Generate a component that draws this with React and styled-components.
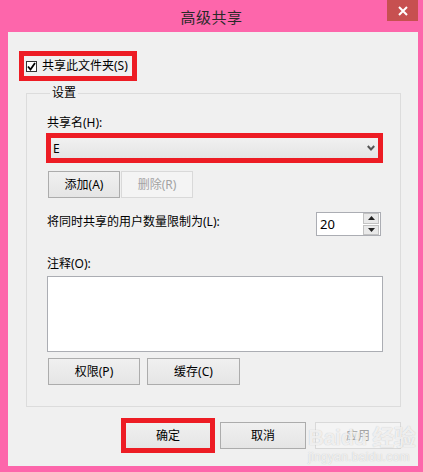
import React from 'react'
import styled, { createGlobalStyle } from 'styled-components'

const GlobalStyle = createGlobalStyle`
  html, body {
    margin: 0;
    padding: 0;
    background: #fd66ab;
  }
  * {
    box-sizing: border-box;
  }
`

const font = `"Noto Sans", "Noto Sans CJK SC", sans-serif`

const Frame = styled.div`
  position: relative;
  width: 423px;
  height: 472px;
  background: #fd66ab;
  padding: 0 5px 6px 8px;
  display: flex;
  flex-direction: column;
  font-family: ${font};
  font-size: 12px;
  color: #000;
`

const TitleBar = styled.div`
  position: relative;
  height: 32px;
  display: flex;
  align-items: center;
  justify-content: center;
  padding-right: 3px;
`

const Title = styled.div`
  font-size: 15px;
  color: #2a2a2a;
  letter-spacing: 0.5px;
`

const CloseButton = styled.div`
  position: absolute;
  top: 0;
  right: 0;
  width: 31px;
  height: 21px;
  background: #c75050;
  display: flex;
  align-items: center;
  justify-content: center;
`

const Client = styled.div`
  flex: 1;
  background: #f0f0f0;
  padding: 24px 17px 0 18px;
  display: flex;
  flex-direction: column;
`

const CheckLabel = styled.label`
  align-self: flex-start;
  margin-left: -2px;
  height: 20px;
  display: flex;
  align-items: center;
  gap: 5px;
  padding: 0 4px 0 2px;
  line-height: 16px;
  outline: ${p => (p.$marked ? '5px solid #ed1c24' : 'none')};
`

const CheckBox = styled.span`
  width: 11px;
  height: 11px;
  border: 1px solid #333;
  background: #fff;
  display: flex;
  align-items: center;
  justify-content: center;
`

const Group = styled.fieldset`
  margin: 9px 0 0 0;
  border: 1px solid #dcdcdc;
  padding: 14px 17px 21px 20px;
  min-width: 0;
  display: flex;
  flex-direction: column;
`

const Legend = styled.legend`
  margin-left: 3px;
  padding: 0 2px;
  line-height: 16px;
`

const FieldLabel = styled.div`
  line-height: 16px;
  margin-top: ${p => p.$top || 0}px;
`

const Combo = styled.div`
  margin: 4px 0 0 1px;
  width: 333px;
  height: 26px;
  background: linear-gradient(#f2f2f2, #e3e3e3);
  border: 1px solid #acacac;
  display: flex;
  align-items: center;
  justify-content: space-between;
  padding: 0 5px 0 4px;
  outline: ${p => (p.$marked ? '5px solid #ed1c24' : 'none')};
  outline-offset: -3px;
`

const ButtonRow = styled.div`
  display: flex;
  gap: ${p => p.$gap || 1}px;
  margin-top: ${p => p.$top || 0}px;
  justify-content: ${p => (p.$end ? 'flex-end' : 'flex-start')};
  padding-left: ${p => p.$indent || 0}px;
`

const Button = styled.div`
  width: ${p => p.$w || 86}px;
  height: 27px;
  display: flex;
  align-items: center;
  justify-content: center;
  line-height: 16px;
  background: ${p => (p.$disabled ? '#f4f4f4' : 'linear-gradient(#f0f0f0, #e5e5e5)')};
  border: 1px solid ${p => (p.$disabled ? '#d9d9d9' : p.$default ? '#3399ff' : '#acacac')};
  color: ${p => (p.$disabled ? '#a3a3a3' : '#000')};
  outline: ${p => (p.$marked ? '5px solid #ed1c24' : 'none')};
  outline-offset: -1px;
`

const LimitRow = styled.div`
  display: flex;
  justify-content: space-between;
  align-items: flex-start;
  margin-top: 14px;
  padding-right: 2px;
`

const LimitText = styled.div`
  line-height: 16px;
  padding-top: 2px;
`

const Spin = styled.div`
  width: 65px;
  height: 24px;
  border: 1px solid #abadb3;
  background: #fff;
  display: flex;
  align-items: center;
  justify-content: space-between;
  padding: 0 1px 0 3px;
  font-size: 13px;
`

const SpinButtons = styled.div`
  display: flex;
  flex-direction: column;
  gap: 1px;
  height: 22px;
`

const SpinButton = styled.div`
  width: 16px;
  flex: 1;
  background: #e9e9e9;
  border: 1px solid #c2c2c2;
  display: flex;
  align-items: center;
  justify-content: center;
`

const Memo = styled.div`
  margin-top: 4px;
  height: 76px;
  border: 1px solid #abadb3;
  background: #fff;
`

const Watermark = styled.div`
  position: absolute;
  left: 308px;
  top: 426px;
  display: flex;
  flex-direction: column;
  color: rgba(255, 255, 255, 0.75);
  text-shadow: 0 0 1px rgba(120, 120, 120, 0.45);
  pointer-events: none;
`

const MarkMain = styled.div`
  font-family: "Liberation Sans", "Noto Sans CJK SC", sans-serif;
  font-size: 22px;
  font-weight: bold;
  line-height: 24px;
  letter-spacing: -0.5px;
`

const MarkSub = styled.div`
  font-family: "Liberation Sans", sans-serif;
  font-size: 12px;
  line-height: 14px;
  letter-spacing: 0.3px;
`

const Triangle = ({ up }) => (
  <svg width="7" height="4" viewBox="0 0 7 4">
    <path d={up ? 'M0 4 L3.5 0 L7 4 Z' : 'M0 0 L3.5 4 L7 0 Z'} fill="#222" />
  </svg>
)

export default function App() {
  return (
    <>
      <GlobalStyle />
      <Frame>
        <TitleBar>
          <Title>高级共享</Title>
          <CloseButton>
            <svg width="10" height="10" viewBox="0 0 10 10">
              <path d="M1 1 L9 9 M9 1 L1 9" stroke="#fff" strokeWidth="2" />
            </svg>
          </CloseButton>
        </TitleBar>
        <Client>
          <CheckLabel $marked>
            <CheckBox>
              <svg width="9" height="9" viewBox="0 0 9 9">
                <path d="M1 4.5 L3.5 7.5 L8 1" stroke="#000" strokeWidth="1.8" fill="none" />
              </svg>
            </CheckBox>
            共享此文件夹(S)
          </CheckLabel>
          <Group>
            <Legend>设置</Legend>
            <FieldLabel>共享名(H):</FieldLabel>
            <Combo $marked>
              <span>E</span>
              <svg width="8" height="6" viewBox="0 0 8 6">
                <path d="M0.8 1 L4 4.5 L7.2 1" stroke="#555" strokeWidth="2" fill="none" />
              </svg>
            </Combo>
            <ButtonRow $top={10} $indent={1}>
              <Button $w={72}>添加(A)</Button>
              <Button $w={72} $disabled>删除(R)</Button>
            </ButtonRow>
            <LimitRow>
              <LimitText>将同时共享的用户数量限制为(L):</LimitText>
              <Spin>
                <span>20</span>
                <SpinButtons>
                  <SpinButton><Triangle up /></SpinButton>
                  <SpinButton><Triangle /></SpinButton>
                </SpinButtons>
              </Spin>
            </LimitRow>
            <FieldLabel $top={20}>注释(O):</FieldLabel>
            <Memo />
            <ButtonRow $top={6} $gap={7} $indent={1}>
              <Button $w={92}>权限(P)</Button>
              <Button $w={93}>缓存(C)</Button>
            </ButtonRow>
          </Group>
          <ButtonRow $top={15} $gap={9} $end>
            <Button $default $marked>确定</Button>
            <Button>取消</Button>
            <Button $disabled>应用</Button>
          </ButtonRow>
        </Client>
        <Watermark>
          <MarkMain>Baidu 经验</MarkMain>
          <MarkSub>jingyan.baidu.com</MarkSub>
        </Watermark>
      </Frame>
    </>
  )
}
